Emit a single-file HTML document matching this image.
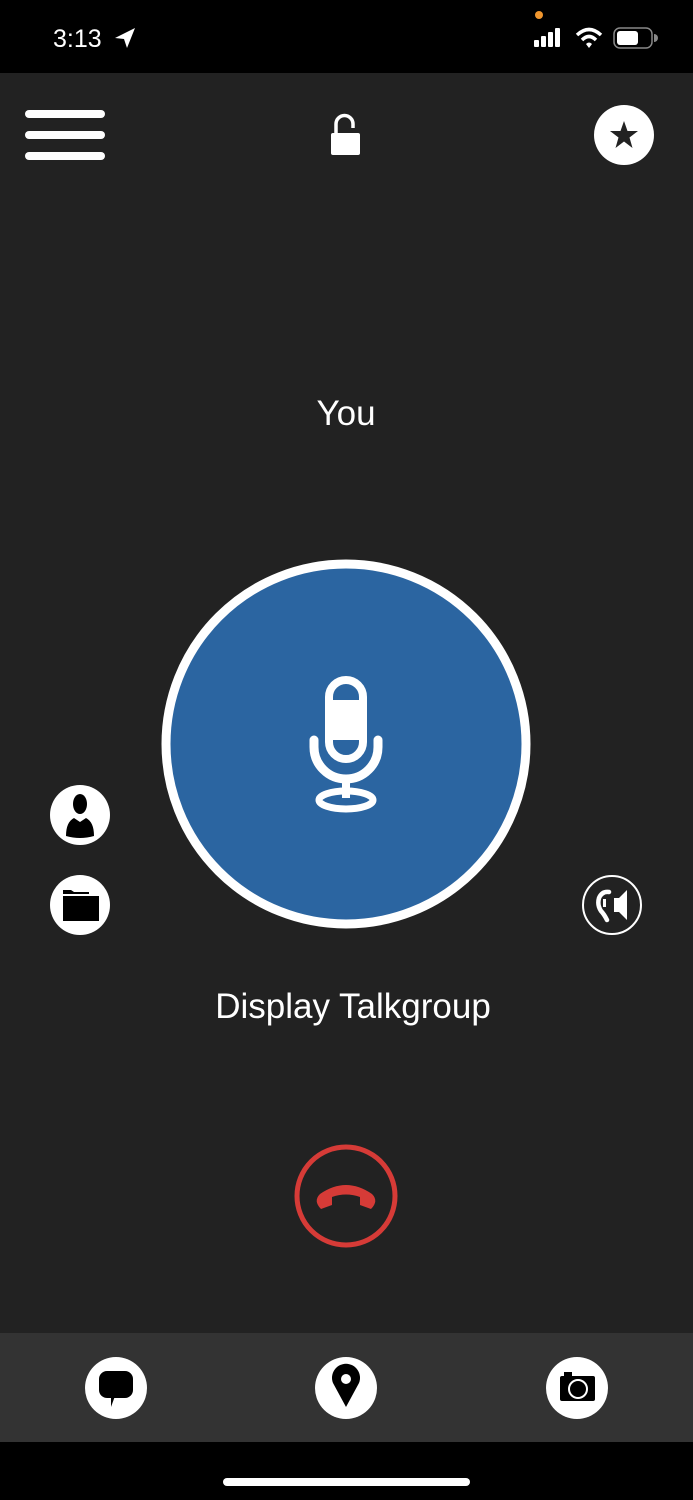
<!DOCTYPE html>
<html><head><meta charset="utf-8"><style>
html,body{margin:0;padding:0;background:#222;}
body{width:693px;height:1500px;position:relative;overflow:hidden;font-family:"Liberation Sans",sans-serif;}
svg{position:absolute;left:0;top:0;}
</style></head><body>
<svg width="693" height="1500" viewBox="0 0 693 1500" xmlns="http://www.w3.org/2000/svg">
<rect x="0" y="0" width="693" height="73" fill="#000"/>
<rect x="0" y="73" width="693" height="1260" fill="#222"/>
<rect x="0" y="1333" width="693" height="109" fill="#333"/>
<rect x="0" y="1442" width="693" height="58" fill="#000"/>
<rect x="223" y="1478" width="247" height="8" rx="4" fill="#fff"/>
<!-- status bar -->
<text x="53" y="47" font-size="25" fill="#fff" font-family="Liberation Sans">3:13</text>
<path d="M135 28 L115 38 L124 39 L127 48 Z" fill="#fff"/>
<circle cx="539" cy="15" r="4" fill="#f0962e"/>
<rect x="534" y="40" width="5" height="7" rx="1" fill="#fff"/>
<rect x="541" y="36" width="5" height="11" rx="1" fill="#fff"/>
<rect x="548" y="32" width="5" height="15" rx="1" fill="#fff"/>
<rect x="555" y="28" width="5" height="19" rx="1" fill="#fff"/>
<path d="M577 35 Q589 24 601 35" stroke="#fff" stroke-width="3.5" fill="none"/>
<path d="M582 40 Q589 33 596 40" stroke="#fff" stroke-width="3.5" fill="none"/>
<path d="M586 44 L589 48 L592 44 Q589 41 586 44Z" fill="#fff"/>
<rect x="614" y="28" width="38" height="20" rx="6" stroke="#888" stroke-width="1.5" fill="none"/>
<rect x="617" y="31" width="21" height="14" rx="3" fill="#fff"/>
<path d="M654 34 v8 a3 3 0 0 0 0 -8z" fill="#888"/>
<!-- header -->
<rect x="25" y="110" width="80" height="8" rx="4" fill="#fff"/>
<rect x="25" y="131" width="80" height="8" rx="4" fill="#fff"/>
<rect x="25" y="152" width="80" height="8" rx="4" fill="#fff"/>
<path d="M336 134 v-10 a8.5 8.5 0 0 1 17 0 v4" stroke="#fff" stroke-width="3.5" fill="none"/>
<rect x="331" y="133" width="29" height="22" rx="2" fill="#fff"/>
<circle cx="624" cy="135" r="30" fill="#fff"/>
<path d="M624 121 L627.5 131 L638 131 L629.5 137.5 L632.5 148 L624 141.5 L615.5 148 L618.5 137.5 L610 131 L620.5 131 Z" fill="#222"/>
<text x="346" y="425" font-size="35" fill="#fff" text-anchor="middle">You</text>
<!-- big mic button -->
<circle cx="346" cy="744" r="180" fill="#2b65a1" stroke="#fff" stroke-width="9"/>
<rect x="329" y="680" width="34" height="79" rx="17" fill="none" stroke="#fff" stroke-width="8"/>
<rect x="329" y="700" width="34" height="40" fill="#fff"/>
<path d="M314 740 v7 a32 32 0 0 0 64 0 v-7" stroke="#fff" stroke-width="9" fill="none" stroke-linecap="round"/>
<rect x="342" y="778" width="8" height="20" fill="#fff"/>
<ellipse cx="346" cy="800" rx="27" ry="9" fill="none" stroke="#fff" stroke-width="7"/>
<!-- left icons -->
<circle cx="80" cy="815" r="30" fill="#fff"/>
<ellipse cx="80" cy="804" rx="7" ry="10" fill="#000"/>
<path d="M66 836 q0 -14 8 -18 l6 4 l6 -4 q8 4 8 18 q-14 4 -28 0z" fill="#000"/>
<circle cx="80" cy="905" r="30" fill="#fff"/>
<path d="M63 920 v-30 h8 l3 2 h15 v2 h-26z" fill="#000"/>
<rect x="63" y="896" width="36" height="25" fill="#000"/>
<!-- ear/speaker -->
<circle cx="612" cy="905" r="29" fill="none" stroke="#fff" stroke-width="2"/>
<path d="M607 920 q-3 -6 -6 -9 q-4 -6 -2 -13 q3 -7 10 -6" stroke="#fff" stroke-width="4.5" fill="none" stroke-linecap="round"/>
<rect x="603" y="899" width="3" height="8" fill="#fff"/>
<path d="M614 898 h5 l8 -8 v30 l-8 -8 h-5z" fill="#fff"/>
<text x="353" y="1018" font-size="35" fill="#fff" text-anchor="middle">Display Talkgroup</text>
<!-- hangup -->
<circle cx="346" cy="1196" r="49" fill="none" stroke="#d63b37" stroke-width="5"/>
<path d="M321 1209 q-8 -8 -1 -15 q26 -18 52 0 q7 7 -1 15 l-11 -4 v-8 q-14 -5 -28 0 v8z" fill="#d63b37"/>
<!-- bottom icons -->
<circle cx="116" cy="1388" r="31" fill="#fff"/>
<rect x="99" y="1371" width="34" height="27" rx="8" fill="#000"/>
<path d="M115 1396 l-4 0 l0 11z" fill="#000"/>
<circle cx="346" cy="1388" r="31" fill="#fff"/>
<path d="M346 1407 L333 1383 a14 14 0 1 1 26 0 Z" fill="#000"/>
<circle cx="346" cy="1379" r="5" fill="#fff"/>
<circle cx="577" cy="1388" r="31" fill="#fff"/>
<rect x="560" y="1376" width="35" height="25" rx="2" fill="#000"/>
<rect x="564" y="1372" width="8" height="5" fill="#000"/>
<circle cx="578" cy="1389" r="9" fill="none" stroke="#fff" stroke-width="2"/>
</svg>
</body></html>
